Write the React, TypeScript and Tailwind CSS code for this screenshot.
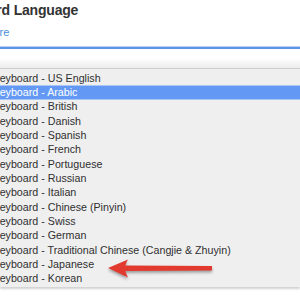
import React from 'react';

const layouts = [
  'US English',
  'Arabic',
  'British',
  'Danish',
  'Spanish',
  'French',
  'Portuguese',
  'Russian',
  'Italian',
  'Chinese (Pinyin)',
  'Swiss',
  'German',
  'Traditional Chinese (Cangjie & Zhuyin)',
  'Japanese',
  'Korean',
];

export default function App() {
  return (
    <div className="relative w-[300px] h-[300px] overflow-hidden bg-white font-['Liberation_Sans',Arial,sans-serif]">
      {/* header, cropped on the left */}
      <div className="ml-[-53px] pt-[1px] h-[46px]">
        <h2 className="text-[14px] leading-[18px] font-semibold tracking-[-0.2px] text-[#333]">Keyboard Language</h2>
        <a className="block ml-[6px] mt-[6px] text-[11px] leading-[14px] text-[#4a8fe0]">Learn more</a>
      </div>

      {/* focused select field */}
      <div className="h-[3px] border-t border-[#b9d2f4] bg-[#5b93e6]" />
      <div className="h-[19px] bg-gradient-to-b from-white via-white to-[#ececec]" />

      {/* dropdown list */}
      <div className="border-t border-[#cfcfcf] bg-[#efefef] pt-[2px] pb-[1px] shadow-[0_2px_2px_rgba(0,0,0,0.18)]">
        {layouts.map((name) => {
          const active = name === 'Arabic';
          return (
            <div
              key={name}
              className={
                active
                  ? 'h-[14.33px] flex items-center bg-[#6399f5] text-white border-y border-[#a9c5f6]'
                  : 'h-[14.33px] flex items-center text-[#303030]'
              }
            >
              <span className="ml-[-7.5px] text-[10.7px] leading-none whitespace-nowrap">Keyboard - {name}</span>
            </div>
          );
        })}
      </div>

      {/* red annotation arrow */}
      <svg className="absolute left-[104px] top-[256px] drop-shadow-[0_2px_1.5px_rgba(0,0,0,0.35)]" width="112" height="26" viewBox="0 0 112 26">
        <path
          d="M4 12 L24 3.5 Q21.5 8 21.5 9.5 L108 10 L108 14.5 L21.5 15 Q21.5 16.5 24 21.5 Z"
          fill="#e23a2f"
        />
      </svg>
    </div>
  );
}
